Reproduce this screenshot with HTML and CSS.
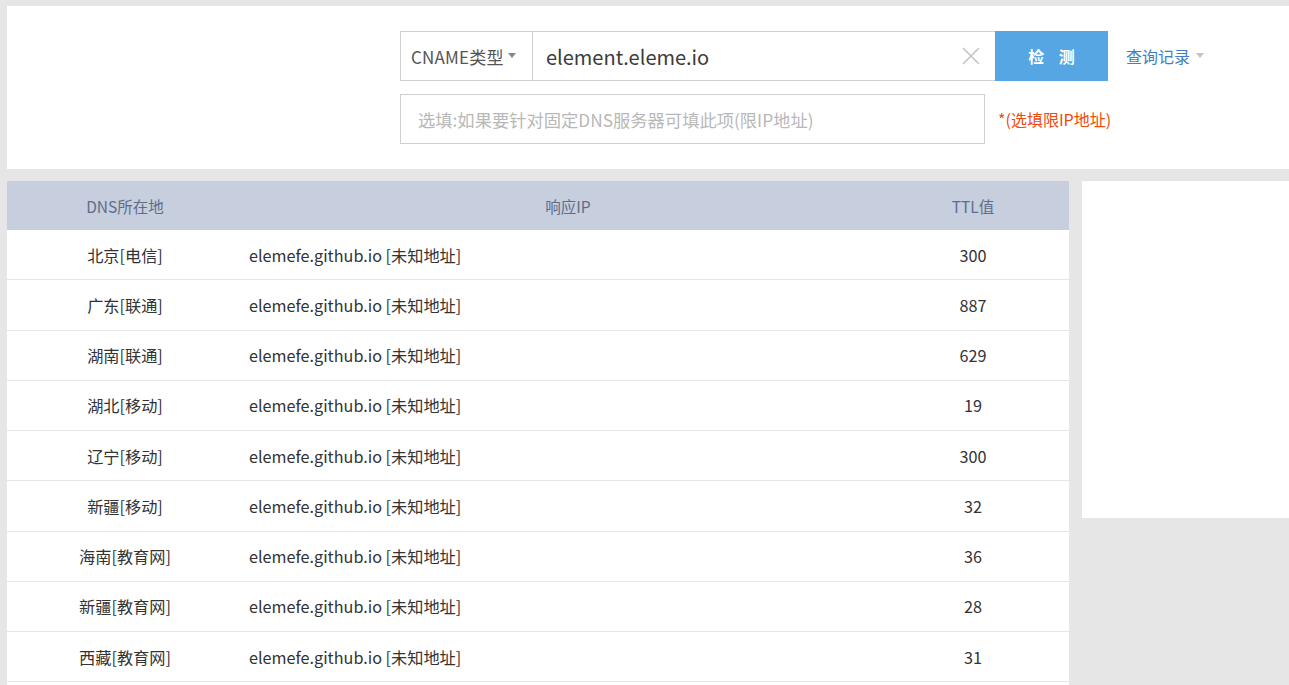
FILE: index.html
```html
<!DOCTYPE html>
<html lang="zh-CN">
<head>
<meta charset="utf-8">
<link rel="stylesheet" href="styles.css">
</head>
<body>
<div class="page">
  <section class="top">
    <div class="form">
      <div class="row1">
        <div class="group">
          <div class="select">CNAME类型<span class="caret"></span></div>
          <div class="domain">
            <span class="value">element.eleme.io</span>
            <svg class="clear" width="18" height="18" viewBox="0 0 18 18"><path d="M1 1L17 17M17 1L1 17" stroke="#c4c4c4" stroke-width="1.6" fill="none"/></svg>
          </div>
          <button class="check">检&nbsp;&nbsp;&nbsp;&nbsp;测</button>
        </div>
        <a class="history">查询记录<span class="caret light"></span></a>
      </div>
      <div class="row2">
        <div class="dns">选填:如果要针对固定DNS服务器可填此项(限IP地址)</div>
        <span class="hint">*(选填限IP地址)</span>
      </div>
    </div>
  </section>
  <section class="bottom">
    <div class="table">
      <div class="tr head">
        <div class="c1">DNS所在地</div>
        <div class="c2">响应IP</div>
        <div class="c3">TTL值</div>
      </div>
      <div class="tr"><div class="c1">北京[电信]</div><div class="c2">elemefe.github.io [未知地址]</div><div class="c3">300</div></div>
      <div class="tr"><div class="c1">广东[联通]</div><div class="c2">elemefe.github.io [未知地址]</div><div class="c3">887</div></div>
      <div class="tr"><div class="c1">湖南[联通]</div><div class="c2">elemefe.github.io [未知地址]</div><div class="c3">629</div></div>
      <div class="tr"><div class="c1">湖北[移动]</div><div class="c2">elemefe.github.io [未知地址]</div><div class="c3">19</div></div>
      <div class="tr"><div class="c1">辽宁[移动]</div><div class="c2">elemefe.github.io [未知地址]</div><div class="c3">300</div></div>
      <div class="tr"><div class="c1">新疆[移动]</div><div class="c2">elemefe.github.io [未知地址]</div><div class="c3">32</div></div>
      <div class="tr"><div class="c1">海南[教育网]</div><div class="c2">elemefe.github.io [未知地址]</div><div class="c3">36</div></div>
      <div class="tr"><div class="c1">新疆[教育网]</div><div class="c2">elemefe.github.io [未知地址]</div><div class="c3">28</div></div>
      <div class="tr"><div class="c1">西藏[教育网]</div><div class="c2">elemefe.github.io [未知地址]</div><div class="c3">31</div></div>
    </div>
    <aside class="side"></aside>
  </section>
</div>
</body>
</html>
```

FILE: styles.css
```css
* { box-sizing: border-box; }
html, body { margin: 0; padding: 0; }
body {
  background: #e6e6e6;
  font-family: "Noto Sans CJK SC", "Noto Sans", sans-serif;
  color: #333;
  overflow: hidden;
  height: 685px;
}
.page { padding: 6px 0 0 7px; }
.top {
  background: #fff;
  height: 163px;
  padding: 25px 0 0 393px;
}
.row1 { display: flex; align-items: center; }
.group { display: flex; height: 50px; }
.select {
  width: 132px;
  border: 1px solid #d0d0d0;
  border-right: none;
  display: flex;
  align-items: center;
  padding-left: 10px;
  font-size: 17px;
  letter-spacing: 0.2px;
  color: #555;
}
.caret {
  display: inline-block;
  width: 0; height: 0;
  border-left: 4.5px solid transparent;
  border-right: 4.5px solid transparent;
  border-top: 5px solid #888;
  margin-left: 4px;
  margin-top: -2px;
}
.caret.light { border-top-color: #c4c4c4; margin-left: 6px; }
.domain {
  width: 463px;
  border: 1px solid #d0d0d0;
  border-right: none;
  display: flex;
  align-items: center;
  justify-content: space-between;
  padding: 0 15px 0 13px;
}
.value { font-size: 20px; color: #3b3b3b; }
.clear { display: block; }
.check {
  width: 113px;
  border: none;
  background: #55a6e2;
  color: #fff;
  font-family: inherit;
  font-size: 16px;
  font-weight: bold;
  padding: 0;
}
.history {
  margin-left: 18px;
  color: #3d7fc5;
  font-size: 16px;
  display: flex;
  align-items: center;
}
.row2 { display: flex; align-items: center; margin-top: 13px; }
.dns {
  width: 585px;
  height: 50px;
  border: 1px solid #d0d0d0;
  display: flex;
  align-items: center;
  padding-left: 17px;
  font-size: 17.3px;
  color: #b8b8b8;
}
.hint { margin-left: 13px; color: #ee4a0c; font-size: 16px; }

.bottom {
  display: flex;
  align-items: flex-start;
  gap: 13px;
  margin-top: 12px;
}
.table { width: 1062px; background: #fff; padding-bottom: 10px; }
.side { flex: 1; height: 337px; background: #fff; }
.tr {
  display: flex;
  height: 50.25px;
  align-items: center;
  border-bottom: 1px solid #e6e6e6;
  font-size: 16.2px;
  color: #333;
}
.tr.head {
  height: 49px;
  border-bottom: none;
  background: #c7cedd;
  color: #5f6d8c;
  font-size: 15.5px;
}
.c1 { width: 236px; text-align: center; }
.c2 { width: 634px; padding-left: 6px; }
.head .c2 { text-align: center; padding-left: 16px; }
.c3 { flex: 1; text-align: center; }
```
